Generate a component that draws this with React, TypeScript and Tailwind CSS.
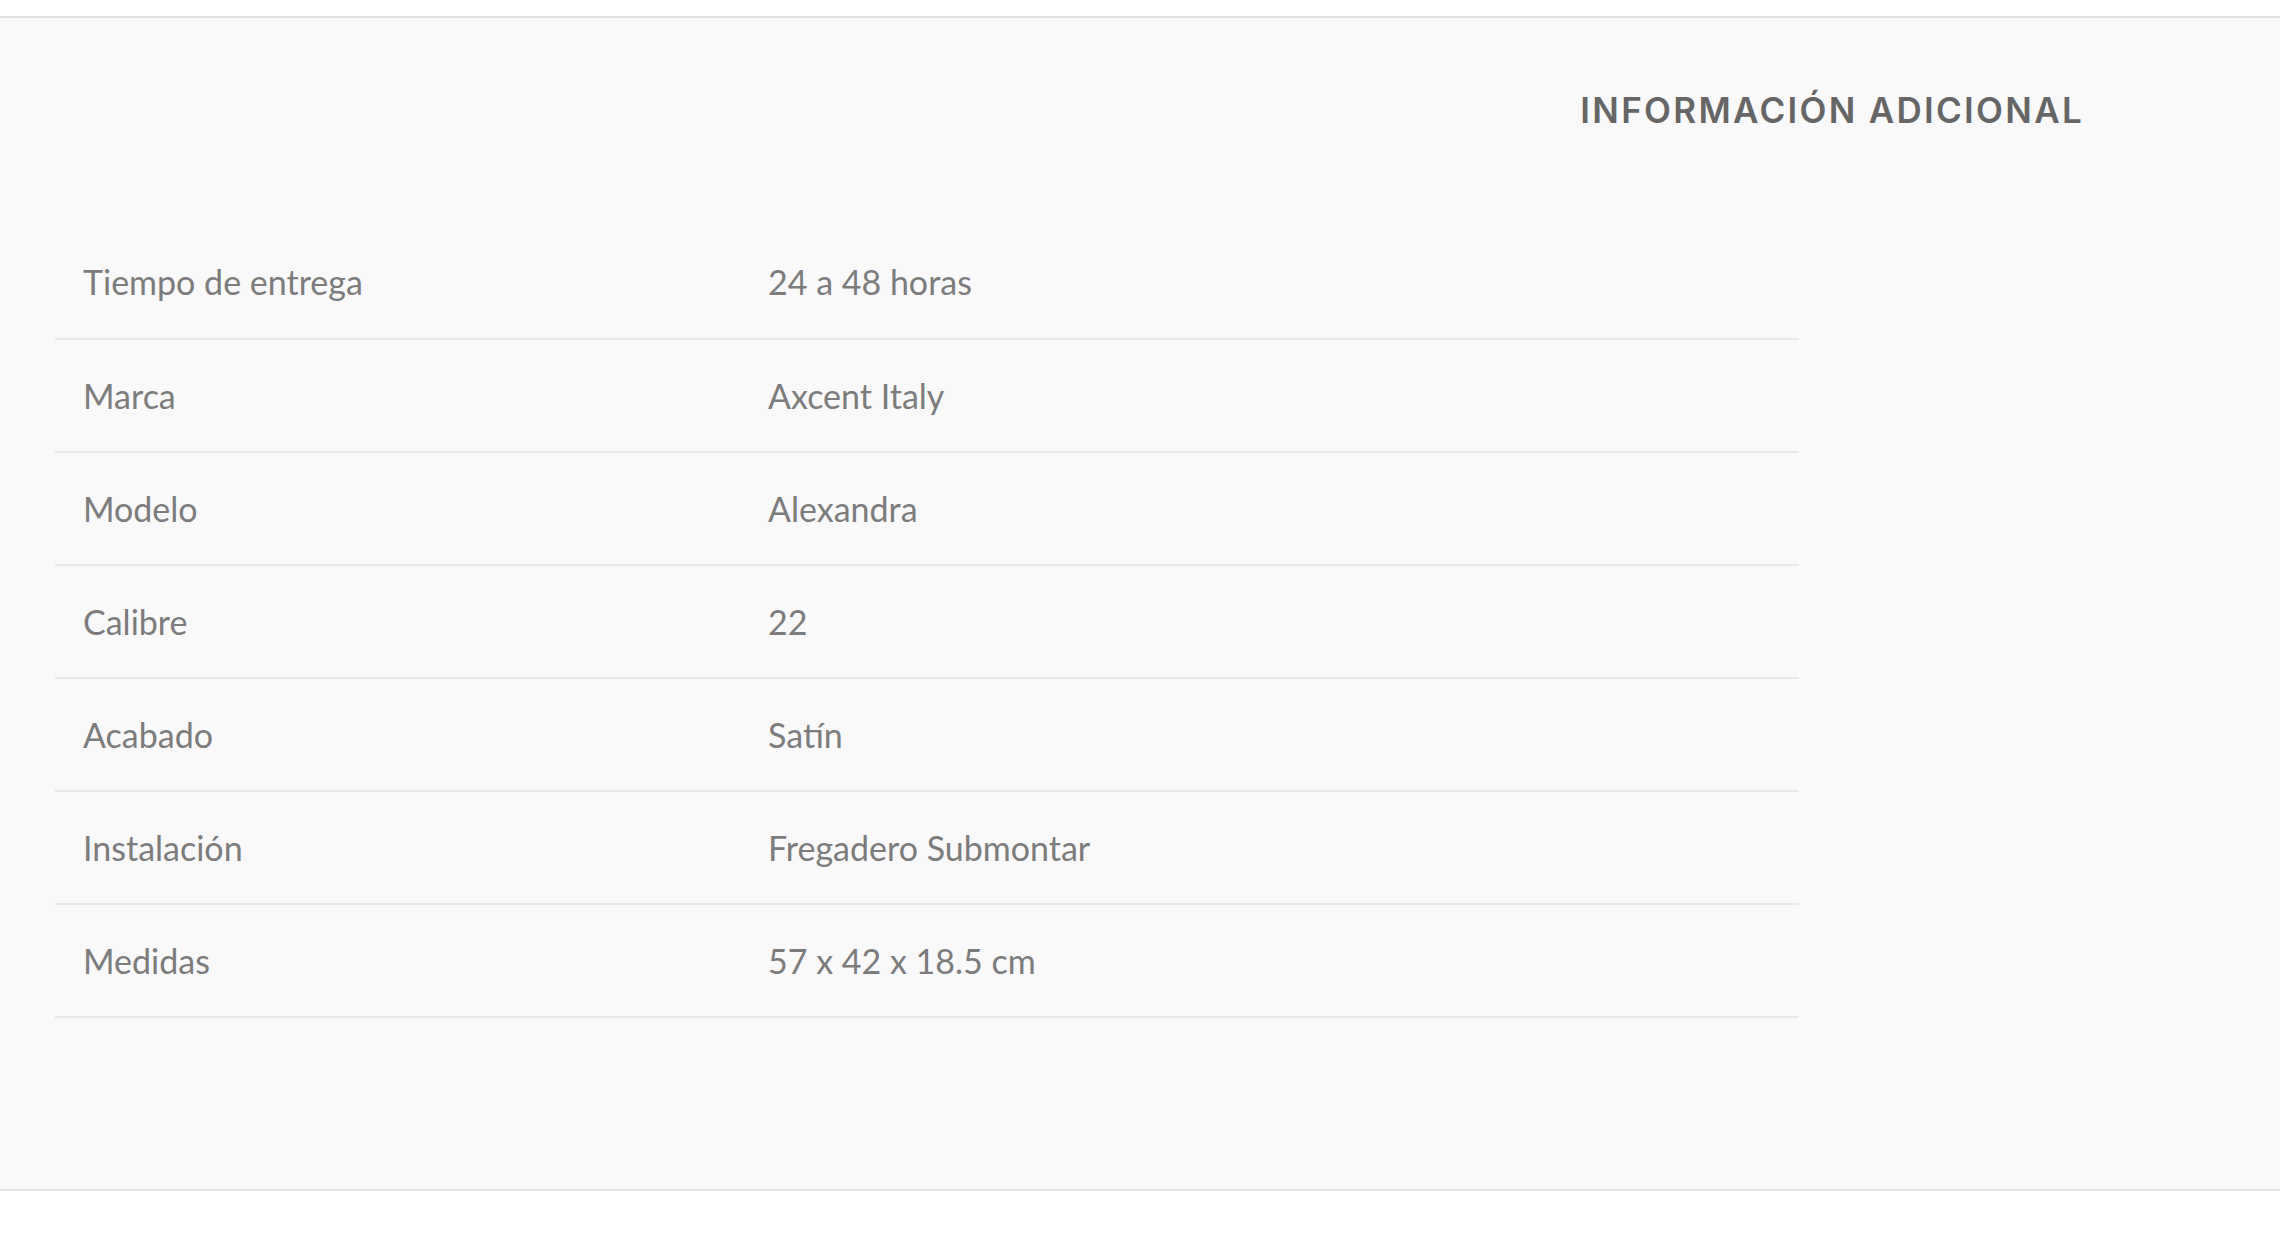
const rows = [
  ['Tiempo de entrega', '24 a 48 horas'],
  ['Marca', 'Axcent Italy'],
  ['Modelo', 'Alexandra'],
  ['Calibre', '22'],
  ['Acabado', 'Satín'],
  ['Instalación', 'Fregadero Submontar'],
  ['Medidas', '57 x 42 x 18.5 cm'],
];

export default function App() {
  return (
    <div className="min-h-[1260px] bg-white">
      <div className="h-4" />
      <section className="border-t-2 border-b-2 border-[#e2e2e2] bg-[#f9f9f9]">
        <div className="h-[3px] border-b border-[#f1f1f1] bg-white/40" />
        <div className="flex justify-end pr-[196px] pt-[63px]">
          <h2 className="font-['Inter',sans-serif] text-[35px] font-semibold uppercase tracking-[2.3px] text-[#666666]">
            Información adicional
          </h2>
        </div>
        <table className="ml-[55px] mt-[89px] mb-[171px] w-[1744px] border-collapse font-['Lato',sans-serif] text-[34px] text-[#7c7c7c]">
          <tbody>
            {rows.map(([label, value]) => (
              <tr key={label} className="h-[113px] border-b-2 border-[#e8e8e8]">
                <td className="w-[685px] pl-[28px] align-middle">{label}</td>
                <td className="pl-[28px] align-middle">{value}</td>
              </tr>
            ))}
          </tbody>
        </table>
      </section>
    </div>
  );
}
